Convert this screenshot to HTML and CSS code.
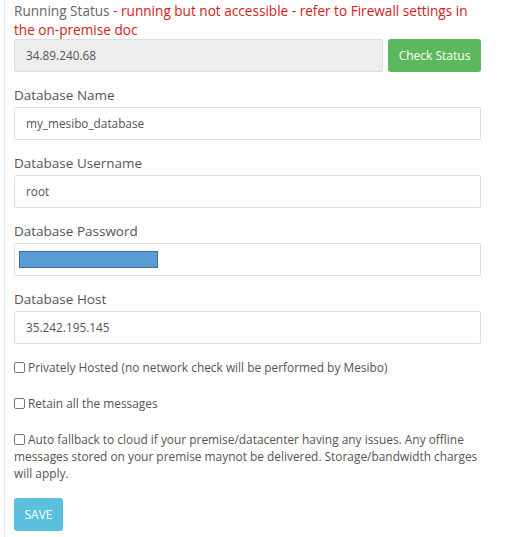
FILE: index.html
```html
<!DOCTYPE html>
<html>
<head>
<meta charset="utf-8">
<link rel="stylesheet" href="styles.css">
</head>
<body>
<div class="panel">
  <div class="status-title">Running Status <span class="warn">- running but not accessible - refer to Firewall settings in the on-premise doc</span></div>
  <div class="status-row">
    <div class="input readonly">34.89.240.68</div>
    <button class="btn btn-green">Check Status</button>
  </div>

  <div class="group">
    <label class="label">Database Name</label>
    <div class="input">my_mesibo_database</div>
  </div>
  <div class="group">
    <label class="label">Database Username</label>
    <div class="input">root</div>
  </div>
  <div class="group">
    <label class="label">Database Password</label>
    <div class="input pw"><span class="redact"></span></div>
  </div>
  <div class="group">
    <label class="label">Database Host</label>
    <div class="input">35.242.195.145</div>
  </div>

  <div class="check"><span class="box"></span>Privately Hosted (no network check will be performed by Mesibo)</div>
  <div class="check"><span class="box"></span>Retain all the messages</div>
  <div class="check multi"><span class="box"></span>Auto fallback to cloud if your premise/datacenter having any issues. Any offline messages stored on your premise maynot be delivered. Storage/bandwidth charges will apply.</div>

  <button class="btn btn-blue">SAVE</button>
</div>
</body>
</html>
```
FILE: styles.css
```css
html, body {
  margin: 0;
  padding: 0;
  background: #fff;
}
body {
  font-family: "Open Sans", "Noto Sans", sans-serif;
  color: #555;
}
.panel {
  margin-left: 4px;
  border-left: 1px solid #e8e8e8;
  padding: 1px 0 6px 9px;
  width: 467px;
  min-height: 530px;
}
.status-title {
  font-size: 13.6px;
  line-height: 19px;
  color: #666;
  padding-right: 10px;
}
.warn {
  color: #d42020;
}
.status-row {
  display: flex;
  gap: 5px;
  margin-top: 0;
}
.input {
  box-sizing: border-box;
  height: 33px;
  border: 1px solid #ddd;
  border-radius: 2px;
  padding: 0 11px;
  font-size: 11.8px;
  line-height: 31px;
  color: #555;
  background: #fff;
}
.readonly {
  flex: 1;
  background: #eee;
}
.btn {
  font-family: "Open Sans", "Noto Sans", sans-serif;
  border: none;
  border-radius: 3px;
  color: #fff;
  font-size: 12px;
  height: 33px;
  padding: 0;
  white-space: nowrap;
  cursor: pointer;
}
.btn-green {
  background: #5cb85c;
  width: 93px;
}
.btn-blue {
  background: #5bc0de;
  width: 49px;
  margin-top: 16px;
}
.group {
  margin-top: 13px;
}
.label {
  display: block;
  font-size: 13.5px;
  line-height: 20px;
  color: #555;
  margin-bottom: 2px;
}
.pw {
  padding: 7px 4px;
}
.redact {
  display: block;
  width: 137px;
  height: 15px;
  background: #5b9bd5;
  border: 1px solid #41719c;
}
.check {
  font-size: 11.9px;
  line-height: 17px;
  color: #555;
  margin-top: 15px;
}
.check + .check {
  margin-top: 19px;
}
.box {
  display: inline-block;
  box-sizing: border-box;
  width: 11px;
  height: 11px;
  border: 1px solid #777;
  border-radius: 2px;
  margin-right: 3px;
  vertical-align: -1px;
}
```
